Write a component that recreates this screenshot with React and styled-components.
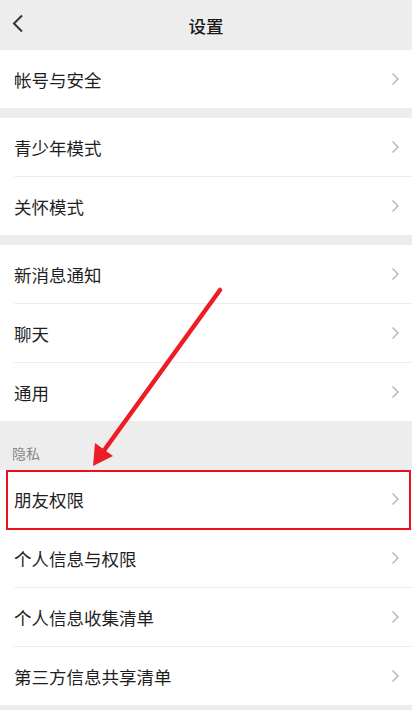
import React from "react";
import styled, { createGlobalStyle } from "styled-components";

const GlobalStyle = createGlobalStyle`
  html, body {
    margin: 0;
    padding: 0;
    background: #ededed;
  }
  body {
    font-family: "Noto Sans CJK SC", "Noto Sans", sans-serif;
  }
`;

const groups = [
  { items: ["帐号与安全"] },
  { items: ["青少年模式", "关怀模式"] },
  { items: ["新消息通知", "聊天", "通用"] },
  {
    title: "隐私",
    items: ["朋友权限", "个人信息与权限", "个人信息收集清单", "第三方信息共享清单"],
    highlight: 0,
  },
];

const Chevron = () => (
  <svg width="9" height="14" viewBox="0 0 9 14">
    <path d="M1.5 1.5 L7 7 L1.5 12.5" fill="none" stroke="#b3b3b3" strokeWidth="1.4" />
  </svg>
);

export default function App() {
  return (
    <Page>
      <GlobalStyle />
      <Header>
        <BackButton>
          <svg width="12" height="20" viewBox="0 0 12 20">
            <path d="M10 1.5 L2 9.5 L10 17.5" fill="none" stroke="#333" strokeWidth="2" />
          </svg>
        </BackButton>
        <Title>设置</Title>
      </Header>
      {groups.map((group, gi) => (
        <React.Fragment key={gi}>
          {group.title ? <SectionTitle>{group.title}</SectionTitle> : gi > 0 && <Gap />}
          <Group>
            {group.items.map((label, i) => (
              <Row key={label} $first={i === 0}>
                <Label>{label}</Label>
                <Chevron />
                {group.highlight === i && <Highlight />}
              </Row>
            ))}
          </Group>
        </React.Fragment>
      ))}
      <Arrow width="412" height="710" viewBox="0 0 412 710">
        <line x1="220" y1="290" x2="100" y2="456" stroke="#ee1c25" strokeWidth="4.5" strokeLinecap="round" />
        <polygon points="93,466 95,443 113,456" fill="#ee1c25" />
      </Arrow>
    </Page>
  );
}

const Page = styled.div`
  position: relative;
  width: 412px;
  height: 710px;
  overflow: hidden;
  background: #ededed;
`;

const Header = styled.div`
  height: 50px;
  display: flex;
  align-items: center;
  justify-content: center;
  position: relative;
  background: #ededed;
`;

const BackButton = styled.div`
  position: absolute;
  left: 12px;
  top: 14px;
  display: flex;
`;

const Title = styled.div`
  font-size: 17.5px;
  font-weight: 500;
  color: #1a1a1a;
`;

const Gap = styled.div`
  height: 10px;
`;

const SectionTitle = styled.div`
  height: 49px;
  box-sizing: border-box;
  padding: 22px 0 0 12px;
  font-size: 14px;
  color: #888;
  line-height: 20px;
`;

const Group = styled.div`
  background: #fff;
`;

const Row = styled.div`
  position: relative;
  height: 58px;
  display: flex;
  align-items: center;
  justify-content: space-between;
  padding: 0 12px 0 14px;
  border-top: ${(p) => (p.$first ? "none" : "1px solid transparent")};
  &::before {
    content: "";
    display: ${(p) => (p.$first ? "none" : "block")};
    position: absolute;
    top: -1px;
    left: 14px;
    right: 0;
    height: 1px;
    background: #ededed;
  }
`;

const Label = styled.div`
  font-size: 17.5px;
  color: #1f1f1f;
`;

const Highlight = styled.div`
  position: absolute;
  z-index: 2;
  left: 6px;
  right: 1px;
  top: 0;
  bottom: -2px;
  border: 2px solid #e8121c;
  pointer-events: none;
`;

const Arrow = styled.svg`
  position: absolute;
  z-index: 3;
  left: 0;
  top: 0;
  pointer-events: none;
`;
